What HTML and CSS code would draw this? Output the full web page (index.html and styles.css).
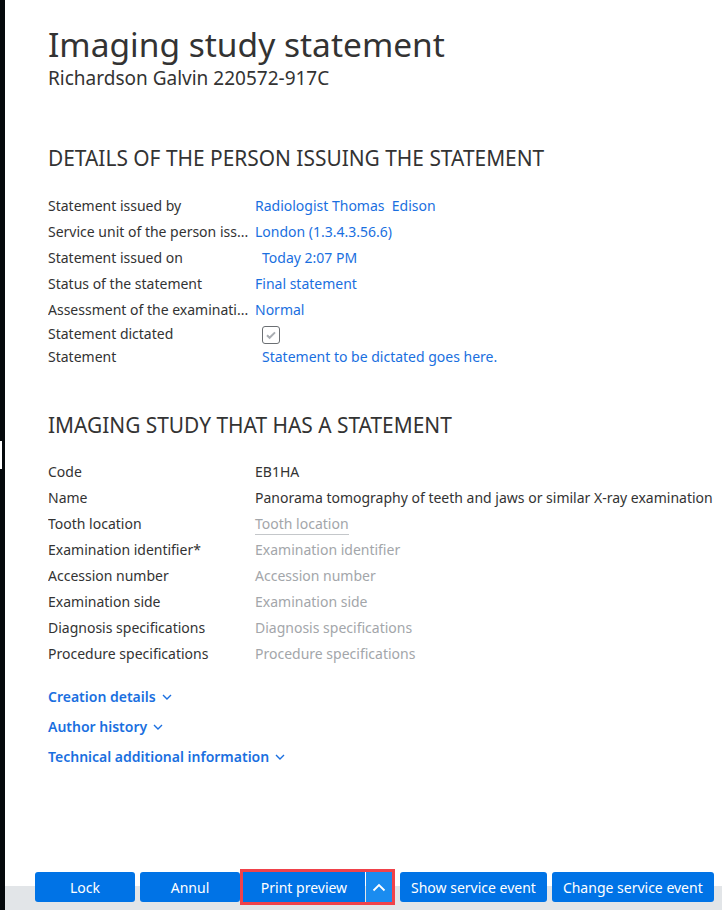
FILE: index.html
```html
<!DOCTYPE html>
<html lang="en">
  <head>
    <meta charset="UTF-8" />
    <meta name="viewport" content="width=device-width, initial-scale=1.0" />
    <title>Imaging study statement</title>
    <link rel="stylesheet" href="styles.css">
  </head>
  <body>
    <div class="rail"><span class="rail-mark"></span></div>
    <div class="page">
      <div class="content">
        <h1>Imaging study statement</h1>
        <div class="patient">Richardson Galvin 220572-917C</div>

        <h2>DETAILS OF THE PERSON ISSUING THE STATEMENT</h2>
        <div class="fields">
          <div class="label">Statement issued by</div>
          <div class="value link">Radiologist Thomas&nbsp; Edison</div>
          <div class="label">Service unit of the person iss...</div>
          <div class="value link">London (1.3.4.3.56.6)</div>
          <div class="label">Statement issued on</div>
          <div class="value link indent">Today 2:07 PM</div>
          <div class="label">Status of the statement</div>
          <div class="value link">Final statement</div>
          <div class="label">Assessment of the examinati...</div>
          <div class="value link">Normal</div>
          <div class="label short">Statement dictated</div>
          <div class="value short indent">
            <span class="check">
              <svg width="14" height="14" viewBox="0 0 14 14"><path d="M3 7.2l2.6 2.6L11 4.4" fill="none" stroke="#a9adb2" stroke-width="2"/></svg>
            </span>
          </div>
          <div class="label short">Statement</div>
          <div class="value short link indent">Statement to be dictated goes here.</div>
        </div>

        <h2 class="second">IMAGING STUDY THAT HAS A STATEMENT</h2>
        <div class="fields">
          <div class="label">Code</div>
          <div class="value">EB1HA</div>
          <div class="label">Name</div>
          <div class="value">Panorama tomography of teeth and jaws or similar X-ray examination</div>
          <div class="label">Tooth location</div>
          <div class="value empty"><span class="underline">Tooth location</span></div>
          <div class="label">Examination identifier*</div>
          <div class="value empty">Examination identifier</div>
          <div class="label">Accession number</div>
          <div class="value empty">Accession number</div>
          <div class="label">Examination side</div>
          <div class="value empty">Examination side</div>
          <div class="label">Diagnosis specifications</div>
          <div class="value empty">Diagnosis specifications</div>
          <div class="label">Procedure specifications</div>
          <div class="value empty">Procedure specifications</div>
        </div>

        <div class="toggles">
          <a class="toggle">Creation details <svg width="10" height="6" viewBox="0 0 10 6"><path d="M1 1l4 4 4-4" fill="none" stroke="currentColor" stroke-width="1.4"/></svg></a>
          <a class="toggle">Author history <svg width="10" height="6" viewBox="0 0 10 6"><path d="M1 1l4 4 4-4" fill="none" stroke="currentColor" stroke-width="1.4"/></svg></a>
          <a class="toggle">Technical additional information <svg width="10" height="6" viewBox="0 0 10 6"><path d="M1 1l4 4 4-4" fill="none" stroke="currentColor" stroke-width="1.4"/></svg></a>
        </div>
      </div>

      <div class="actions">
        <button class="btn narrow">Lock</button>
        <button class="btn narrow">Annul</button>
        <div class="split">
          <button class="btn split-main">Print preview</button>
          <button class="btn split-arrow">
            <svg width="14" height="9" viewBox="0 0 14 9"><path d="M1.5 7.5L7 2l5.5 5.5" fill="none" stroke="white" stroke-width="1.8"/></svg>
          </button>
        </div>
        <button class="btn">Show service event</button>
        <button class="btn">Change service event</button>
      </div>
    </div>
  </body>
</html>
```

FILE: styles.css
```css
* {
  box-sizing: border-box;
}
body {
  margin: 0;
  height: 100vh;
  display: flex;
  background: white;
  color: #333;
  font-family: "Noto Sans", "Open Sans", sans-serif;
  font-size: 14px;
  overflow: hidden;
}
.rail {
  width: 5px;
  flex-shrink: 0;
  background: #05090c;
  padding-top: 441px;
}
.rail-mark {
  display: block;
  width: 2px;
  height: 28px;
  background: white;
}
.page {
  flex: 1;
  display: flex;
  flex-direction: column;
  min-width: 0;
}
.content {
  flex: 1;
  padding: 24px 0 0 43px;
}
h1 {
  margin: 0;
  font-size: 33.5px;
  font-weight: 400;
  line-height: 40px;
  color: #333;
}
.patient {
  margin-top: 2px;
  font-size: 19px;
  line-height: 24px;
  color: #333;
}
h2 {
  margin: 53px 0 20px;
  font-size: 20.9px;
  font-weight: 400;
  line-height: 30px;
  color: #333;
}
h2.second {
  margin: 41px 0 19px;
}
.fields {
  display: grid;
  grid-template-columns: 207px 1fr;
}
.label,
.value {
  height: 26px;
  line-height: 26px;
  white-space: nowrap;
}
.label {
  overflow: hidden;
}
.fields .short {
  height: 23px;
  line-height: 22px;
}
.link {
  color: #1a6fe0;
}
.indent {
  padding-left: 7px;
}
.empty {
  color: #a3a6aa;
}
.underline {
  border-bottom: 1px solid #c4c7ca;
  padding-bottom: 1px;
}
.check {
  display: inline-flex;
  align-items: center;
  justify-content: center;
  width: 18px;
  height: 18px;
  border: 1px solid #6b6f73;
  border-radius: 3px;
  vertical-align: middle;
}
.toggles {
  display: flex;
  flex-direction: column;
  align-items: flex-start;
  gap: 9px;
  margin-top: 19px;
}
.toggle {
  color: #1a6fe0;
  font-weight: 600;
  font-size: 14px;
  line-height: 21px;
  display: inline-flex;
  align-items: center;
  gap: 6px;
  cursor: pointer;
}
.actions {
  display: flex;
  align-items: center;
  gap: 5px;
  padding: 6px 0 8px 30px;
  background: linear-gradient(white 20px, #e2e5e8 20px);
  height: 44px;
}
.btn {
  height: 30px;
  padding: 0 11px;
  font-family: "Noto Sans", "Open Sans", sans-serif;
  font-size: 14px;
  color: white;
  background-color: #0073e6;
  border: none;
  border-radius: 3px;
  cursor: pointer;
}
.btn.narrow {
  width: 100px;
}
.split {
  display: flex;
  gap: 1px;
  outline: 3px solid #f0424a;
  margin: 0 3px 0 -2px;
}
.split-main {
  width: 122px;
  border-radius: 0;
}
.split-arrow {
  width: 26px;
  padding: 0;
  border-radius: 0;
  background-color: #1a8cf0;
  display: flex;
  align-items: center;
  justify-content: center;
}
```
